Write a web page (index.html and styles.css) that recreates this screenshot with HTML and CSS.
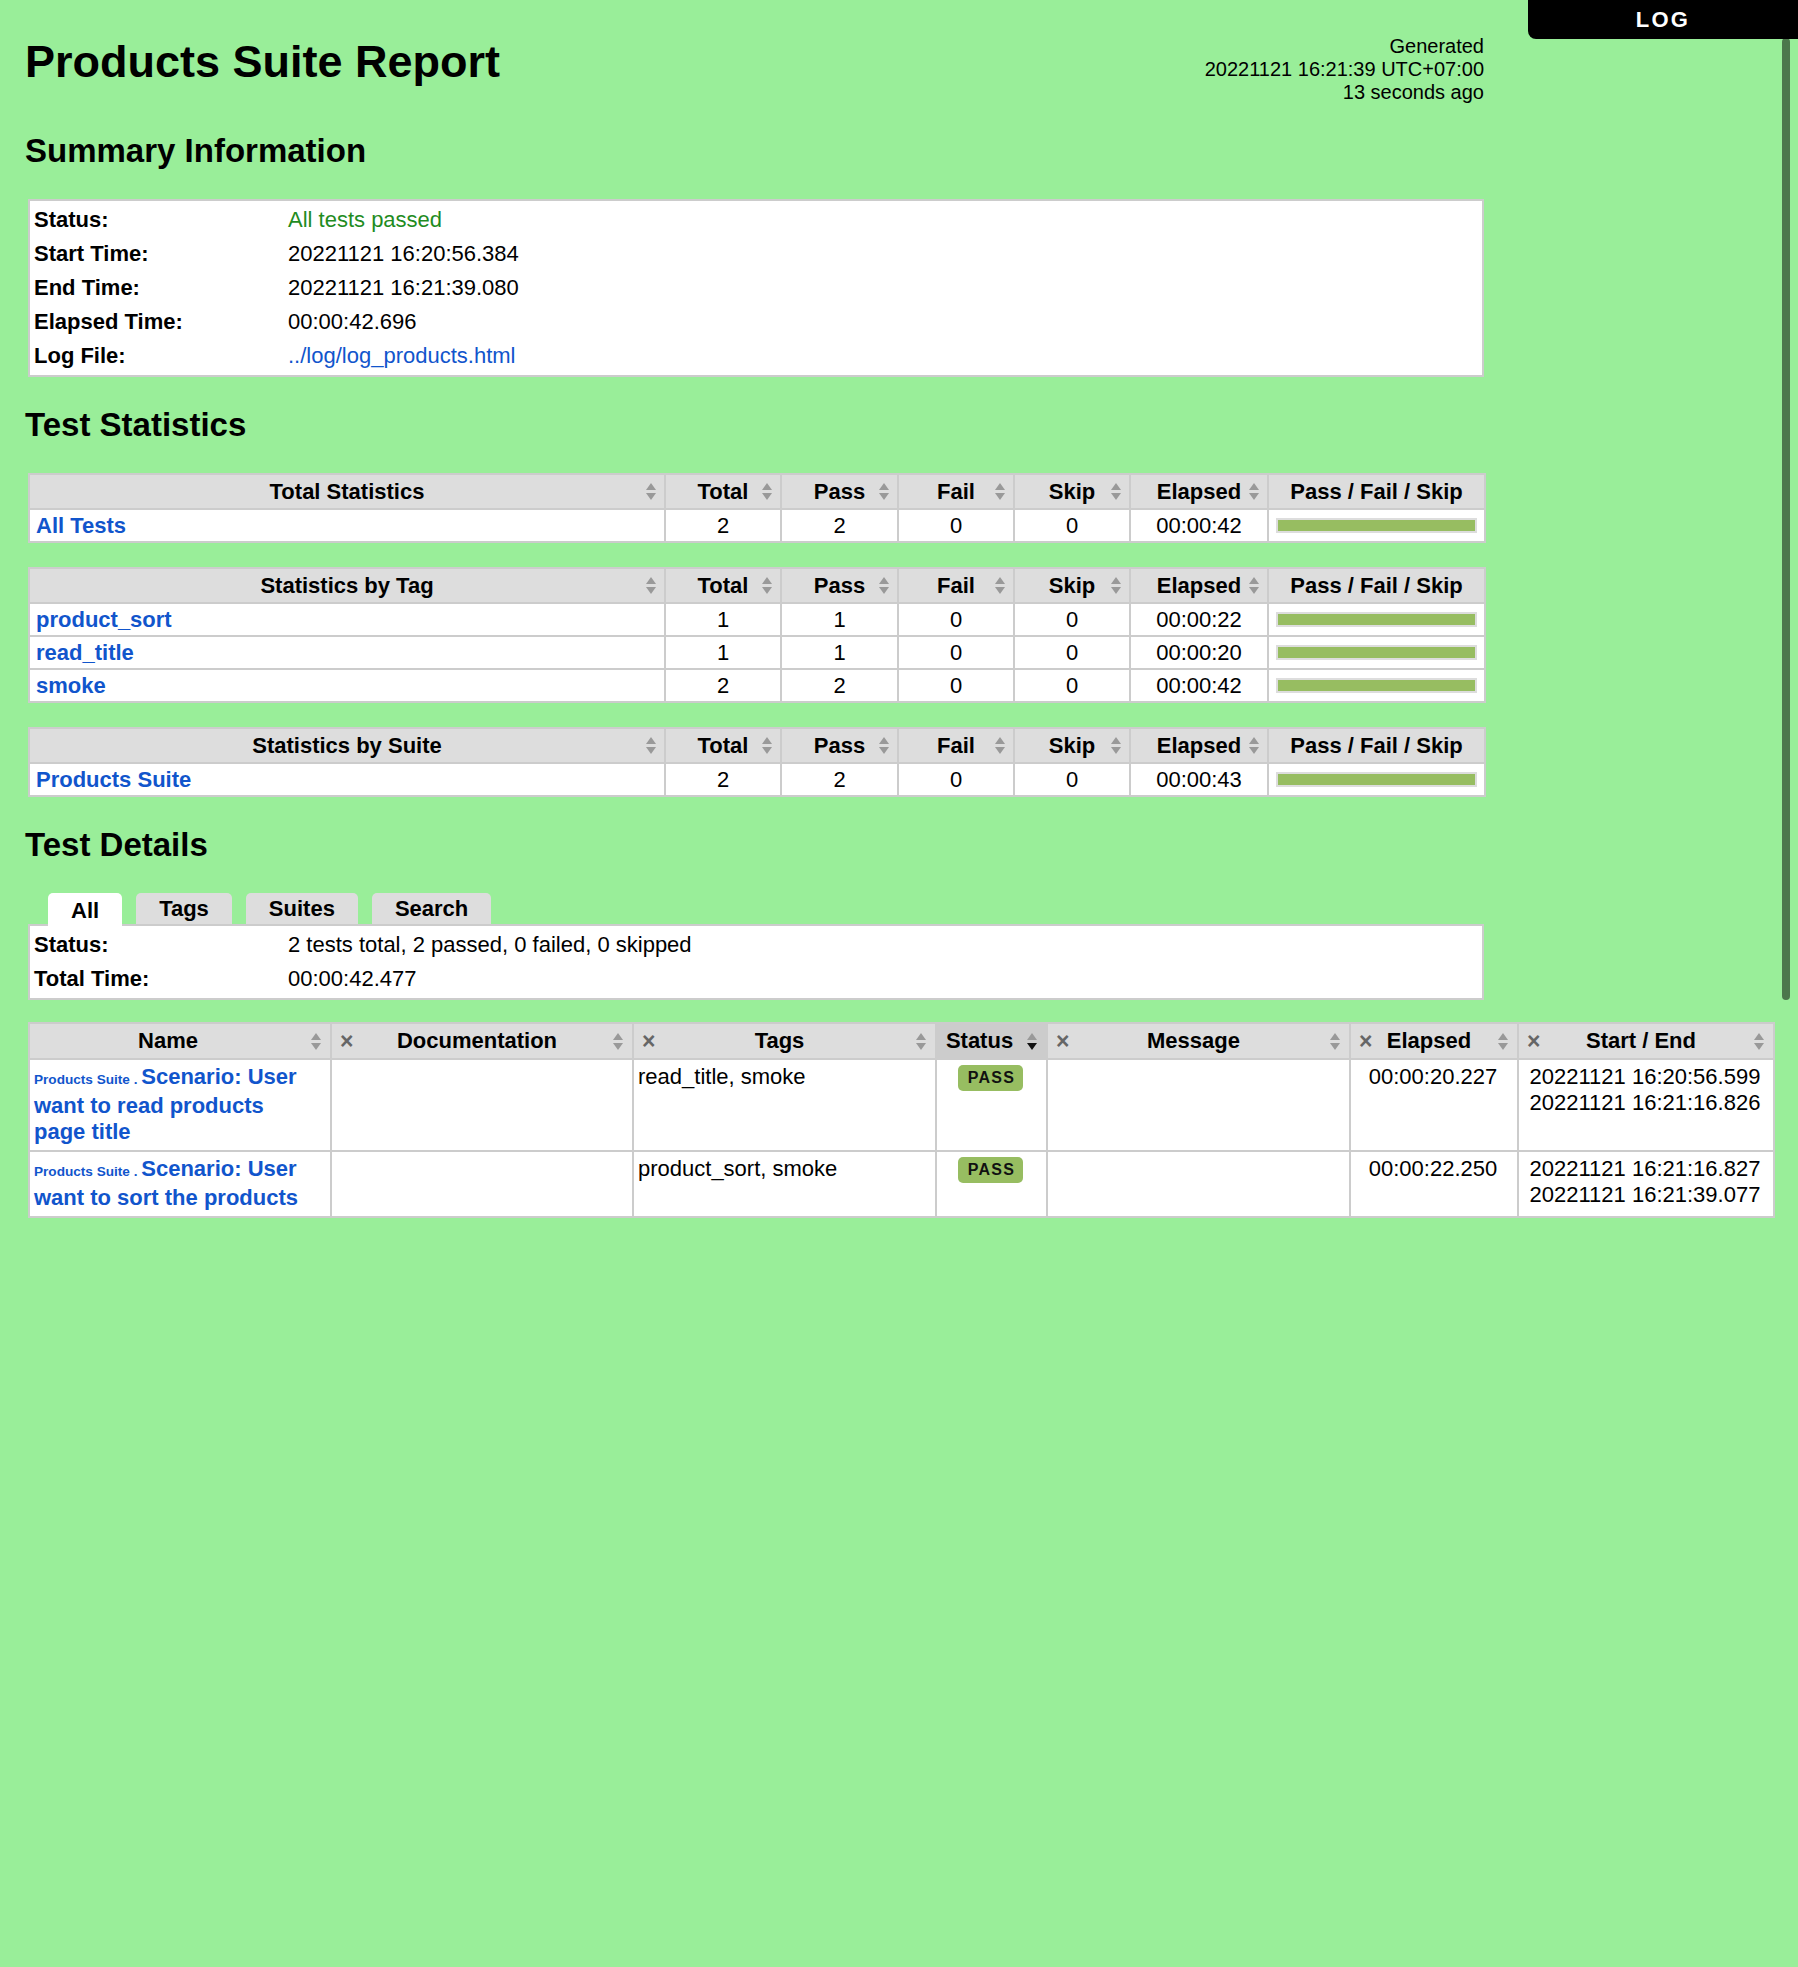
FILE: index.html
```html
<!DOCTYPE html>
<html lang="en">

<head>
    <meta charset="UTF-8">
    <meta name="viewport" content="width=device-width, initial-scale=1.0">
    <title>Products Suite Report</title>
    <link rel="stylesheet" href="styles.css">
</head>

<body>
    <a class="log-link" href="#">LOG</a>
    <div class="scroll-thumb"></div>

    <div class="report">
        <div class="header">
            <h1>Products Suite Report</h1>
            <div class="generated">
                Generated<br>
                20221121 16:21:39 UTC+07:00<br>
                13 seconds ago
            </div>
        </div>

        <h2 class="first">Summary Information</h2>
        <div class="details">
            <div class="details-label">Status:</div>
            <div class="details-value passed">All tests passed</div>
            <div class="details-label">Start Time:</div>
            <div class="details-value">20221121 16:20:56.384</div>
            <div class="details-label">End Time:</div>
            <div class="details-value">20221121 16:21:39.080</div>
            <div class="details-label">Elapsed Time:</div>
            <div class="details-value">00:00:42.696</div>
            <div class="details-label">Log File:</div>
            <div class="details-value"><a href="#">../log/log_products.html</a></div>
        </div>

        <h2>Test Statistics</h2>
        <table class="statistics">
            <colgroup>
                <col style="width: 636px"><col style="width: 116px"><col style="width: 117px"><col style="width: 116px">
                <col style="width: 116px"><col style="width: 138px"><col style="width: 217px">
            </colgroup>
            <tr>
                <th>Total Statistics</th><th>Total</th><th>Pass</th><th>Fail</th><th>Skip</th><th>Elapsed</th><th class="no-sort">Pass / Fail / Skip</th>
            </tr>
            <tr>
                <td class="stat-name"><a href="#">All Tests</a></td><td>2</td><td>2</td><td>0</td><td>0</td><td>00:00:42</td>
                <td><div class="graph"><div class="pass-bar"></div></div></td>
            </tr>
        </table>

        <table class="statistics">
            <colgroup>
                <col style="width: 636px"><col style="width: 116px"><col style="width: 117px"><col style="width: 116px">
                <col style="width: 116px"><col style="width: 138px"><col style="width: 217px">
            </colgroup>
            <tr>
                <th>Statistics by Tag</th><th>Total</th><th>Pass</th><th>Fail</th><th>Skip</th><th>Elapsed</th><th class="no-sort">Pass / Fail / Skip</th>
            </tr>
            <tr>
                <td class="stat-name"><a href="#">product_sort</a></td><td>1</td><td>1</td><td>0</td><td>0</td><td>00:00:22</td>
                <td><div class="graph"><div class="pass-bar"></div></div></td>
            </tr>
            <tr>
                <td class="stat-name"><a href="#">read_title</a></td><td>1</td><td>1</td><td>0</td><td>0</td><td>00:00:20</td>
                <td><div class="graph"><div class="pass-bar"></div></div></td>
            </tr>
            <tr>
                <td class="stat-name"><a href="#">smoke</a></td><td>2</td><td>2</td><td>0</td><td>0</td><td>00:00:42</td>
                <td><div class="graph"><div class="pass-bar"></div></div></td>
            </tr>
        </table>

        <table class="statistics">
            <colgroup>
                <col style="width: 636px"><col style="width: 116px"><col style="width: 117px"><col style="width: 116px">
                <col style="width: 116px"><col style="width: 138px"><col style="width: 217px">
            </colgroup>
            <tr>
                <th>Statistics by Suite</th><th>Total</th><th>Pass</th><th>Fail</th><th>Skip</th><th>Elapsed</th><th class="no-sort">Pass / Fail / Skip</th>
            </tr>
            <tr>
                <td class="stat-name"><a href="#">Products Suite</a></td><td>2</td><td>2</td><td>0</td><td>0</td><td>00:00:43</td>
                <td><div class="graph"><div class="pass-bar"></div></div></td>
            </tr>
        </table>

        <h2>Test Details</h2>
        <div class="tabs">
            <div class="tab selected">All</div>
            <div class="tab">Tags</div>
            <div class="tab">Suites</div>
            <div class="tab">Search</div>
        </div>
        <div class="details details-short">
            <div class="details-label">Status:</div>
            <div class="details-value">2 tests total, 2 passed, 0 failed, 0 skipped</div>
            <div class="details-label">Total Time:</div>
            <div class="details-value">00:00:42.477</div>
        </div>

        <table class="tests">
            <colgroup>
                <col style="width: 302px"><col style="width: 302px"><col style="width: 303px"><col style="width: 111px">
                <col style="width: 303px"><col style="width: 168px"><col style="width: 256px">
            </colgroup>
            <tr>
                <th>Name</th>
                <th><span class="hide">&times;</span>Documentation</th>
                <th><span class="hide">&times;</span>Tags</th>
                <th class="sorted">Status</th>
                <th><span class="hide">&times;</span>Message</th>
                <th><span class="hide">&times;</span>Elapsed</th>
                <th><span class="hide">&times;</span>Start / End</th>
            </tr>
            <tr>
                <td class="name-cell"><a href="#" class="name"><span class="parent-name">Products Suite . </span>Scenario: User<br>want to read products<br>page title</a></td>
                <td></td>
                <td>read_title, smoke</td>
                <td class="center"><span class="label-pass">PASS</span></td>
                <td></td>
                <td class="center">00:00:20.227</td>
                <td class="center">20221121 16:20:56.599<br>20221121 16:21:16.826</td>
            </tr>
            <tr>
                <td class="name-cell"><a href="#" class="name"><span class="parent-name">Products Suite . </span>Scenario: User<br>want to sort the products</a></td>
                <td></td>
                <td>product_sort, smoke</td>
                <td class="center"><span class="label-pass">PASS</span></td>
                <td></td>
                <td class="center">00:00:22.250</td>
                <td class="center">20221121 16:21:16.827<br>20221121 16:21:39.077</td>
            </tr>
        </table>
    </div>
</body>

</html>
```

FILE: styles.css
```css
* {
    margin: 0;
    padding: 0;
    box-sizing: border-box;
}

body {
    background: #9e9;
    font-family: "Liberation Sans", Arial, Helvetica, sans-serif;
    font-size: 22px;
    color: black;
}

a {
    color: #15c;
    text-decoration: none;
}

.log-link {
    position: fixed;
    top: 0;
    right: 0;
    width: 270px;
    height: 39px;
    line-height: 39px;
    background: black;
    color: white;
    font-weight: bold;
    font-size: 22px;
    letter-spacing: 0.1em;
    text-align: center;
    border-bottom-left-radius: 8px;
}

.scroll-thumb {
    position: fixed;
    top: 38px;
    right: 8px;
    width: 8px;
    height: 962px;
    border-radius: 4px;
    background: rgba(0, 0, 0, 0.5);
}

.report {
    padding-left: 25px;
    width: 1484px;
}

.header {
    display: flex;
    justify-content: space-between;
    align-items: flex-start;
    padding-top: 35px;
}

h1 {
    font-size: 45px;
    line-height: 45px;
    margin: 4px 0 0 0;
}

.generated {
    font-size: 20px;
    line-height: 23px;
    text-align: right;
}

h2 {
    font-size: 33px;
    line-height: 33px;
    margin: 31px 0 32px 0;
}

h2.first {
    margin-top: 30px;
}

/* summary boxes */
.details {
    margin-left: 3px;
    width: 1456px;
    background: white;
    border: 2px solid #ccc;
    padding: 2px 0;
    display: grid;
    grid-template-columns: 254px 1fr;
}

.details-label,
.details-value {
    line-height: 34px;
    padding: 0 4px;
}

.details-label {
    font-weight: bold;
}

.passed {
    color: #1f8c1f;
}

/* statistics tables */
.statistics {
    margin-left: 3px;
    width: 1456px;
    table-layout: fixed;
    border-collapse: collapse;
    background: white;
    margin-bottom: 24px;
}

.statistics th,
.statistics td {
    border: 2px solid #ccc;
}

.statistics th {
    background: #ddd url("data:image/svg+xml,%3Csvg xmlns='http://www.w3.org/2000/svg' width='10' height='17'%3E%3Cpath d='M5 0L10 7H0z' fill='%23999'/%3E%3Cpath d='M5 17L10 10H0z' fill='%23999'/%3E%3C/svg%3E") no-repeat right 8px center;
    line-height: 33px;
    text-align: center;
    padding: 0;
}

.statistics th.no-sort {
    background-image: none;
}

.statistics td {
    line-height: 31px;
    text-align: center;
    padding: 0 6px;
}

.statistics td.stat-name {
    text-align: left;
    font-weight: bold;
}

.graph {
    height: 15px;
    margin: 0 1px 0 1px;
    border: 2px solid #ddd;
    background: white;
}

.pass-bar {
    height: 100%;
    width: 100%;
    background: #97bd61;
}

/* tabs */
.tabs {
    display: flex;
    align-items: flex-end;
    gap: 14px;
    margin-left: 23px;
    position: relative;
    z-index: 1;
}

.tab {
    background: #ddd;
    font-weight: bold;
    height: 31px;
    line-height: 31px;
    padding: 0 23px;
    border-radius: 5px 5px 0 0;
}

.tab.selected {
    background: white;
    height: 33px;
    padding-top: 2px;
    margin-bottom: -2px;
}

/* tests table */
.tests {
    margin-top: 22px;
    margin-left: 3px;
    width: 1745px;
    table-layout: fixed;
    border-collapse: collapse;
    background: white;
}

.tests th,
.tests td {
    border: 2px solid #ccc;
}

.tests th {
    background: #ddd url("data:image/svg+xml,%3Csvg xmlns='http://www.w3.org/2000/svg' width='10' height='17'%3E%3Cpath d='M5 0L10 7H0z' fill='%23999'/%3E%3Cpath d='M5 17L10 10H0z' fill='%23999'/%3E%3C/svg%3E") no-repeat right 9px center;
    line-height: 34px;
    text-align: center;
    padding: 0 28px 0 4px;
    white-space: nowrap;
}

.tests th.sorted {
    background: #ccc url("data:image/svg+xml,%3Csvg xmlns='http://www.w3.org/2000/svg' width='10' height='17'%3E%3Cpath d='M5 0L10 7H0z' fill='%23999'/%3E%3Cpath d='M5 17L10 10H0z' fill='%23111'/%3E%3C/svg%3E") no-repeat right 9px center;
}

.hide {
    float: left;
    width: 10px;
    margin-left: 4px;
    font-size: 23px;
    font-weight: bold;
    line-height: 34px;
    color: #666;
    text-align: left;
}

.tests td {
    vertical-align: top;
    line-height: 26px;
    padding: 4px 6px 5px 4px;
}

.tests td.center {
    text-align: center;
}

.name {
    font-weight: bold;
}

.parent-name {
    font-size: 13.6px;
}

.label-pass {
    display: inline-block;
    background: #97bd61;
    color: #111;
    font-weight: bold;
    font-size: 16px;
    letter-spacing: 0.08em;
    line-height: 22px;
    padding: 2px 8px 2px 10px;
    border-radius: 5px;
    margin-top: 1px;
    vertical-align: top;
}
```
